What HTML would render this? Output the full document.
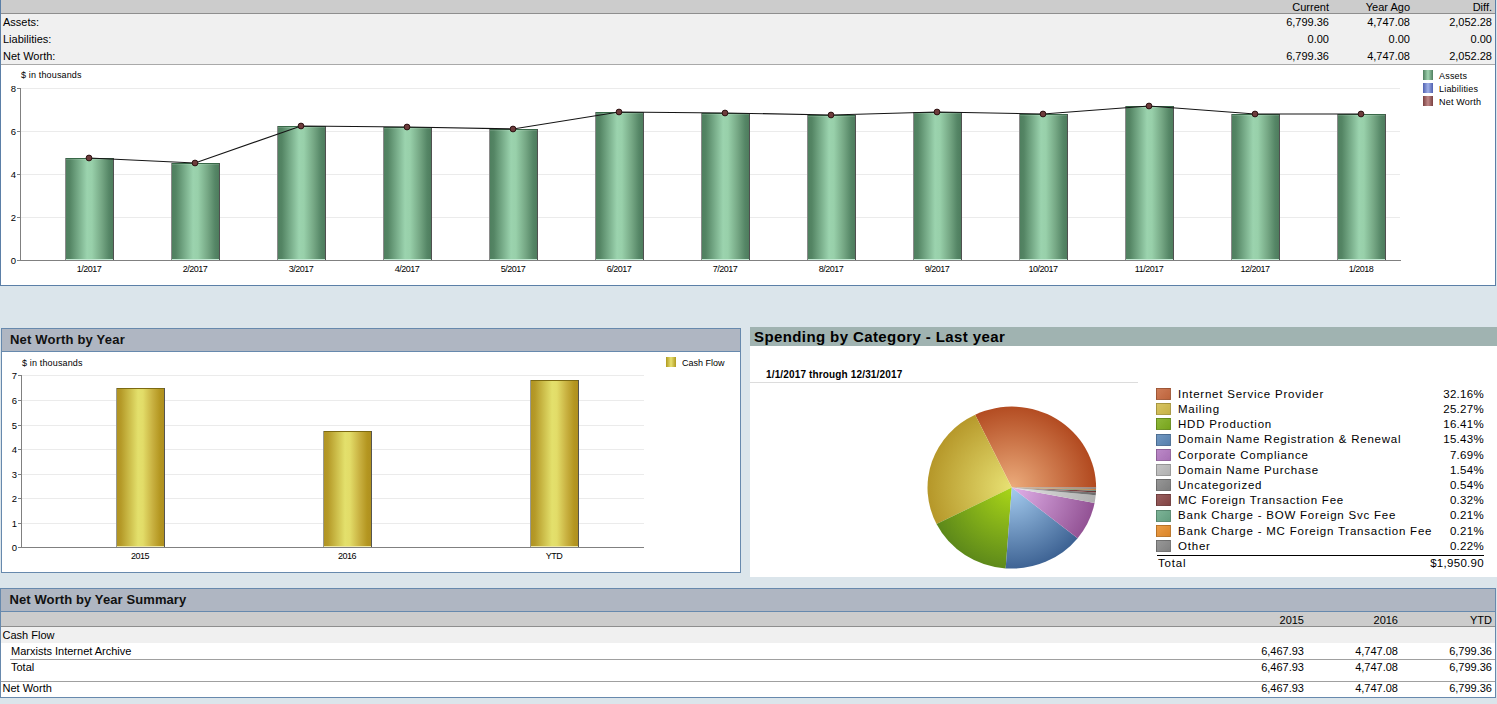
<!DOCTYPE html>
<html><head><meta charset="utf-8"><style>
html,body{margin:0;padding:0;}
body{width:1497px;height:704px;position:relative;overflow:hidden;background:#dbe5eb;font-family:"Liberation Sans", sans-serif;color:#000;}
.abs{position:absolute;}
.t{position:absolute;white-space:nowrap;font-size:11px;line-height:13px;}
.r{text-align:right;}
.sm{position:absolute;white-space:nowrap;font-size:9px;line-height:10px;}
</style></head><body>

<div class="abs" style="left:0;top:0;width:1494px;height:285px;border-left:1px solid #5b7fa7;border-right:1px solid #5b7fa7;border-bottom:1px solid #5b7fa7;background:#fff"></div>
<div class="abs" style="left:1px;top:0;width:1494px;height:13px;background:#cccccc"></div>
<div class="abs" style="left:1px;top:13px;width:1494px;height:1px;background:#8e8e8e"></div>
<div class="abs" style="left:1px;top:14px;width:1494px;height:50px;background:#f0f0f0"></div>
<div class="abs" style="left:1px;top:64px;width:1494px;height:1px;background:#a9a9a9"></div>
<div class="t r" style="right:168px;top:1px;">Current</div>
<div class="t r" style="right:87px;top:1px;">Year Ago</div>
<div class="t r" style="right:5px;top:1px;">Diff.</div>
<div class="t" style="left:3px;top:16px;">Assets:</div>
<div class="t" style="left:3px;top:33px;">Liabilities:</div>
<div class="t" style="left:3px;top:50px;">Net Worth:</div>
<div class="t r" style="right:168px;top:16px;">6,799.36</div>
<div class="t r" style="right:87px;top:16px;">4,747.08</div>
<div class="t r" style="right:5px;top:16px;">2,052.28</div>
<div class="t r" style="right:168px;top:33px;">0.00</div>
<div class="t r" style="right:87px;top:33px;">0.00</div>
<div class="t r" style="right:5px;top:33px;">0.00</div>
<div class="t r" style="right:168px;top:50px;">6,799.36</div>
<div class="t r" style="right:87px;top:50px;">4,747.08</div>
<div class="t r" style="right:5px;top:50px;">2,052.28</div>
<div class="sm" style="left:21px;top:70px;letter-spacing:0.15px">$ in thousands</div>
<div class="sm r" style="right:1481px;top:255.7px;font-size:9.5px">0</div>
<div class="sm r" style="right:1481px;top:212.7px;font-size:9.5px">2</div>
<div class="sm r" style="right:1481px;top:169.7px;font-size:9.5px">4</div>
<div class="sm r" style="right:1481px;top:126.7px;font-size:9.5px">6</div>
<div class="sm r" style="right:1481px;top:83.7px;font-size:9.5px">8</div>
<div class="sm" style="left:49px;width:80px;text-align:center;top:264px;letter-spacing:-0.5px">1/2017</div>
<div class="sm" style="left:155px;width:80px;text-align:center;top:264px;letter-spacing:-0.5px">2/2017</div>
<div class="sm" style="left:261px;width:80px;text-align:center;top:264px;letter-spacing:-0.5px">3/2017</div>
<div class="sm" style="left:367px;width:80px;text-align:center;top:264px;letter-spacing:-0.5px">4/2017</div>
<div class="sm" style="left:473px;width:80px;text-align:center;top:264px;letter-spacing:-0.5px">5/2017</div>
<div class="sm" style="left:579px;width:80px;text-align:center;top:264px;letter-spacing:-0.5px">6/2017</div>
<div class="sm" style="left:685px;width:80px;text-align:center;top:264px;letter-spacing:-0.5px">7/2017</div>
<div class="sm" style="left:791px;width:80px;text-align:center;top:264px;letter-spacing:-0.5px">8/2017</div>
<div class="sm" style="left:897px;width:80px;text-align:center;top:264px;letter-spacing:-0.5px">9/2017</div>
<div class="sm" style="left:1003px;width:80px;text-align:center;top:264px;letter-spacing:-0.5px">10/2017</div>
<div class="sm" style="left:1109px;width:80px;text-align:center;top:264px;letter-spacing:-0.5px">11/2017</div>
<div class="sm" style="left:1215px;width:80px;text-align:center;top:264px;letter-spacing:-0.5px">12/2017</div>
<div class="sm" style="left:1321px;width:80px;text-align:center;top:264px;letter-spacing:-0.5px">1/2018</div>
<div class="sm" style="left:1439px;top:70.5px;letter-spacing:0.2px">Assets</div>
<div class="sm" style="left:1439px;top:83.5px;letter-spacing:0.2px">Liabilities</div>
<div class="sm" style="left:1439px;top:96.5px;letter-spacing:0.2px">Net Worth</div>
<div class="abs" style="left:1px;top:328px;width:738px;height:243px;border:1px solid #6789ad;background:#fff"></div>
<div class="abs" style="left:2px;top:329px;width:738px;height:22px;background:#afb6c2;border-bottom:1px solid #6789ad"></div>
<div class="t" style="left:10px;top:332px;font-size:13px;line-height:15px;font-weight:bold;letter-spacing:0.2px;color:#111">Net Worth by Year</div>
<div class="sm" style="left:22px;top:357.5px;letter-spacing:0.15px">$ in thousands</div>
<div class="sm r" style="right:1480px;top:542.7px;font-size:9.5px">0</div>
<div class="sm r" style="right:1480px;top:518.7px;font-size:9.5px">1</div>
<div class="sm r" style="right:1480px;top:493.7px;font-size:9.5px">2</div>
<div class="sm r" style="right:1480px;top:469.7px;font-size:9.5px">3</div>
<div class="sm r" style="right:1480px;top:444.7px;font-size:9.5px">4</div>
<div class="sm r" style="right:1480px;top:420.7px;font-size:9.5px">5</div>
<div class="sm r" style="right:1480px;top:395.7px;font-size:9.5px">6</div>
<div class="sm r" style="right:1480px;top:370.7px;font-size:9.5px">7</div>
<div class="sm" style="left:100px;width:80px;text-align:center;top:550.5px;letter-spacing:-0.5px">2015</div>
<div class="sm" style="left:307px;width:80px;text-align:center;top:550.5px;letter-spacing:-0.5px">2016</div>
<div class="sm" style="left:514px;width:80px;text-align:center;top:550.5px;letter-spacing:-0.5px">YTD</div>
<div class="sm" style="left:682px;top:357.7px">Cash Flow</div>
<div class="abs" style="left:750px;top:327px;width:747px;height:19px;background:#a0b3b1"></div>
<div class="abs" style="left:750px;top:346px;width:747px;height:231px;background:#fff"></div>
<div class="t" style="left:754px;top:328px;font-size:15px;line-height:17px;font-weight:bold;letter-spacing:0.4px">Spending by Category - Last year</div>
<div class="t" style="left:766px;top:369px;font-size:10px;line-height:12px;font-weight:bold;letter-spacing:0.15px">1/1/2017 through 12/31/2017</div>
<div class="abs" style="left:750px;top:382px;width:388px;height:1px;background:#dcdcdc"></div>
<div class="abs" style="left:1156px;top:388.0px;width:13px;height:10px;border:1px solid rgba(0,0,0,0.18);background:#c86a40;background-image:linear-gradient(135deg,rgba(255,255,255,0.12),rgba(0,0,0,0.06))"></div>
<div class="t" style="left:1178px;top:387.8px;font-size:11.5px;letter-spacing:0.78px">Internet Service Provider</div>
<div class="t r" style="right:13px;top:387.8px;font-size:11.5px;letter-spacing:0.3px">32.16%</div>
<div class="abs" style="left:1156px;top:403.2px;width:13px;height:10px;border:1px solid rgba(0,0,0,0.18);background:#d2bc4c;background-image:linear-gradient(135deg,rgba(255,255,255,0.12),rgba(0,0,0,0.06))"></div>
<div class="t" style="left:1178px;top:403.0px;font-size:11.5px;letter-spacing:0.78px">Mailing</div>
<div class="t r" style="right:13px;top:403.0px;font-size:11.5px;letter-spacing:0.3px">25.27%</div>
<div class="abs" style="left:1156px;top:418.4px;width:13px;height:10px;border:1px solid rgba(0,0,0,0.18);background:#7eae1e;background-image:linear-gradient(135deg,rgba(255,255,255,0.12),rgba(0,0,0,0.06))"></div>
<div class="t" style="left:1178px;top:418.2px;font-size:11.5px;letter-spacing:0.78px">HDD Production</div>
<div class="t r" style="right:13px;top:418.2px;font-size:11.5px;letter-spacing:0.3px">16.41%</div>
<div class="abs" style="left:1156px;top:433.6px;width:13px;height:10px;border:1px solid rgba(0,0,0,0.18);background:#5c88b8;background-image:linear-gradient(135deg,rgba(255,255,255,0.12),rgba(0,0,0,0.06))"></div>
<div class="t" style="left:1178px;top:433.4px;font-size:11.5px;letter-spacing:0.78px">Domain Name Registration &amp; Renewal</div>
<div class="t r" style="right:13px;top:433.4px;font-size:11.5px;letter-spacing:0.3px">15.43%</div>
<div class="abs" style="left:1156px;top:448.8px;width:13px;height:10px;border:1px solid rgba(0,0,0,0.18);background:#b278c0;background-image:linear-gradient(135deg,rgba(255,255,255,0.12),rgba(0,0,0,0.06))"></div>
<div class="t" style="left:1178px;top:448.6px;font-size:11.5px;letter-spacing:0.78px">Corporate Compliance</div>
<div class="t r" style="right:13px;top:448.6px;font-size:11.5px;letter-spacing:0.3px">7.69%</div>
<div class="abs" style="left:1156px;top:464.0px;width:13px;height:10px;border:1px solid rgba(0,0,0,0.18);background:#bcbcbc;background-image:linear-gradient(135deg,rgba(255,255,255,0.12),rgba(0,0,0,0.06))"></div>
<div class="t" style="left:1178px;top:463.8px;font-size:11.5px;letter-spacing:0.78px">Domain Name Purchase</div>
<div class="t r" style="right:13px;top:463.8px;font-size:11.5px;letter-spacing:0.3px">1.54%</div>
<div class="abs" style="left:1156px;top:479.2px;width:13px;height:10px;border:1px solid rgba(0,0,0,0.18);background:#878787;background-image:linear-gradient(135deg,rgba(255,255,255,0.12),rgba(0,0,0,0.06))"></div>
<div class="t" style="left:1178px;top:479.0px;font-size:11.5px;letter-spacing:0.78px">Uncategorized</div>
<div class="t r" style="right:13px;top:479.0px;font-size:11.5px;letter-spacing:0.3px">0.54%</div>
<div class="abs" style="left:1156px;top:494.4px;width:13px;height:10px;border:1px solid rgba(0,0,0,0.18);background:#8a4848;background-image:linear-gradient(135deg,rgba(255,255,255,0.12),rgba(0,0,0,0.06))"></div>
<div class="t" style="left:1178px;top:494.2px;font-size:11.5px;letter-spacing:0.78px">MC Foreign Transaction Fee</div>
<div class="t r" style="right:13px;top:494.2px;font-size:11.5px;letter-spacing:0.3px">0.32%</div>
<div class="abs" style="left:1156px;top:509.6px;width:13px;height:10px;border:1px solid rgba(0,0,0,0.18);background:#6aa888;background-image:linear-gradient(135deg,rgba(255,255,255,0.12),rgba(0,0,0,0.06))"></div>
<div class="t" style="left:1178px;top:509.4px;font-size:11.5px;letter-spacing:0.78px">Bank Charge - BOW Foreign Svc Fee</div>
<div class="t r" style="right:13px;top:509.4px;font-size:11.5px;letter-spacing:0.3px">0.21%</div>
<div class="abs" style="left:1156px;top:524.8px;width:13px;height:10px;border:1px solid rgba(0,0,0,0.18);background:#e88e2c;background-image:linear-gradient(135deg,rgba(255,255,255,0.12),rgba(0,0,0,0.06))"></div>
<div class="t" style="left:1178px;top:524.6px;font-size:11.5px;letter-spacing:0.78px">Bank Charge - MC Foreign Transaction Fee</div>
<div class="t r" style="right:13px;top:524.6px;font-size:11.5px;letter-spacing:0.3px">0.21%</div>
<div class="abs" style="left:1156px;top:540.0px;width:13px;height:10px;border:1px solid rgba(0,0,0,0.18);background:#898989;background-image:linear-gradient(135deg,rgba(255,255,255,0.12),rgba(0,0,0,0.06))"></div>
<div class="t" style="left:1178px;top:539.8px;font-size:11.5px;letter-spacing:0.78px">Other</div>
<div class="t r" style="right:13px;top:539.8px;font-size:11.5px;letter-spacing:0.3px">0.22%</div>
<div class="abs" style="left:1157px;top:555px;width:327px;height:1px;background:#000"></div>
<div class="t" style="left:1158px;top:557px;font-size:11.5px;letter-spacing:0.8px">Total</div>
<div class="t r" style="right:13px;top:557px;font-size:11.5px;letter-spacing:0.3px">$1,950.90</div>
<div class="abs" style="left:0px;top:588px;width:1494px;height:108px;border:1px solid #6789ad;background:#fff"></div>
<div class="abs" style="left:1px;top:589px;width:1494px;height:22px;background:#afb6c2;border-bottom:1px solid #6789ad"></div>
<div class="t" style="left:9.5px;top:592px;font-size:13px;line-height:15px;font-weight:bold;letter-spacing:0.1px;color:#111">Net Worth by Year Summary</div>
<div class="abs" style="left:1px;top:612px;width:1494px;height:14px;background:#cccccc"></div>
<div class="abs" style="left:1px;top:626px;width:1494px;height:1px;background:#8e8e8e"></div>
<div class="abs" style="left:1px;top:627px;width:1494px;height:16px;background:#f0f0f0"></div>
<div class="abs" style="left:10px;top:659px;width:1485px;height:1px;background:#a0a0a0"></div>
<div class="abs" style="left:1px;top:681px;width:1494px;height:1px;background:#a0a0a0"></div>
<div class="t r" style="right:193px;top:614px;">2015</div>
<div class="t r" style="right:99px;top:614px;">2016</div>
<div class="t r" style="right:5px;top:614px;">YTD</div>
<div class="t" style="left:2.5px;top:629px;">Cash Flow</div>
<div class="t" style="left:11px;top:645px;">Marxists Internet Archive</div>
<div class="t" style="left:11px;top:661px;">Total</div>
<div class="t" style="left:2.5px;top:682px;">Net Worth</div>
<div class="t r" style="right:193px;top:645px;">6,467.93</div>
<div class="t r" style="right:99px;top:645px;">4,747.08</div>
<div class="t r" style="right:5px;top:645px;">6,799.36</div>
<div class="t r" style="right:193px;top:661px;">6,467.93</div>
<div class="t r" style="right:99px;top:661px;">4,747.08</div>
<div class="t r" style="right:5px;top:661px;">6,799.36</div>
<div class="t r" style="right:193px;top:682px;">6,467.93</div>
<div class="t r" style="right:99px;top:682px;">4,747.08</div>
<div class="t r" style="right:5px;top:682px;">6,799.36</div>
<svg class="abs" style="left:0;top:0" width="1497" height="704">
<defs>
<linearGradient id="gG" x1="0" x2="1" y1="0" y2="0">
<stop offset="0" stop-color="#4e7e5e"/><stop offset="0.1" stop-color="#548564"/><stop offset="0.45" stop-color="#9bd3ae"/><stop offset="0.55" stop-color="#98d0aa"/><stop offset="0.75" stop-color="#75a784"/><stop offset="0.9" stop-color="#558666"/><stop offset="1" stop-color="#4c7a5b"/>
</linearGradient>
<linearGradient id="gY" x1="0" x2="1" y1="0" y2="0">
<stop offset="0" stop-color="#b09220"/><stop offset="0.1" stop-color="#b59a28"/><stop offset="0.45" stop-color="#e3e06c"/><stop offset="0.55" stop-color="#e2dc68"/><stop offset="0.75" stop-color="#c8b040"/><stop offset="0.9" stop-color="#b49620"/><stop offset="1" stop-color="#ae8e1e"/>
</linearGradient>
<linearGradient id="lG" x1="0" x2="1" y1="0" y2="0"><stop offset="0" stop-color="#4f7f5f"/><stop offset="0.5" stop-color="#a0d4b0"/><stop offset="1" stop-color="#4f7f5f"/></linearGradient>
<linearGradient id="lB" x1="0" x2="1" y1="0" y2="0"><stop offset="0" stop-color="#5060b0"/><stop offset="0.5" stop-color="#a0b0e8"/><stop offset="1" stop-color="#5060b0"/></linearGradient>
<linearGradient id="lR" x1="0" x2="1" y1="0" y2="0"><stop offset="0" stop-color="#7a4040"/><stop offset="0.5" stop-color="#c08888"/><stop offset="1" stop-color="#7a4040"/></linearGradient>
<linearGradient id="lY" x1="0" x2="1" y1="0" y2="0"><stop offset="0" stop-color="#b09a20"/><stop offset="0.5" stop-color="#e8e070"/><stop offset="1" stop-color="#b09a20"/></linearGradient>
</defs>
<line x1="17" x2="20" y1="260.5" y2="260.5" stroke="#808080" stroke-width="1"/>
<line x1="21" x2="1400" y1="217.5" y2="217.5" stroke="#ebebeb" stroke-width="1"/>
<line x1="17" x2="20" y1="217.5" y2="217.5" stroke="#808080" stroke-width="1"/>
<line x1="21" x2="1400" y1="174.5" y2="174.5" stroke="#ebebeb" stroke-width="1"/>
<line x1="17" x2="20" y1="174.5" y2="174.5" stroke="#808080" stroke-width="1"/>
<line x1="21" x2="1400" y1="131.5" y2="131.5" stroke="#ebebeb" stroke-width="1"/>
<line x1="17" x2="20" y1="131.5" y2="131.5" stroke="#808080" stroke-width="1"/>
<line x1="21" x2="1400" y1="88.5" y2="88.5" stroke="#ebebeb" stroke-width="1"/>
<line x1="17" x2="20" y1="88.5" y2="88.5" stroke="#808080" stroke-width="1"/>
<line x1="20.5" x2="20.5" y1="88" y2="261" stroke="#808080" stroke-width="1"/>
<rect x="65" y="158" width="49" height="102" fill="url(#gG)" shape-rendering="crispEdges"/>
<rect x="65" y="158" width="1" height="102" fill="#8a8a8a" shape-rendering="crispEdges"/>
<rect x="113" y="158" width="1" height="102" fill="#505050" shape-rendering="crispEdges"/>
<rect x="66" y="158" width="47" height="1" fill="#386848" shape-rendering="crispEdges"/>
<rect x="66" y="159" width="47" height="1" fill="#ffffff" fill-opacity="0.12" shape-rendering="crispEdges"/>
<rect x="66" y="259" width="47" height="1" fill="#c4ead4" shape-rendering="crispEdges"/>
<rect x="171" y="163" width="49" height="97" fill="url(#gG)" shape-rendering="crispEdges"/>
<rect x="171" y="163" width="1" height="97" fill="#8a8a8a" shape-rendering="crispEdges"/>
<rect x="219" y="163" width="1" height="97" fill="#505050" shape-rendering="crispEdges"/>
<rect x="172" y="163" width="47" height="1" fill="#386848" shape-rendering="crispEdges"/>
<rect x="172" y="164" width="47" height="1" fill="#ffffff" fill-opacity="0.12" shape-rendering="crispEdges"/>
<rect x="172" y="259" width="47" height="1" fill="#c4ead4" shape-rendering="crispEdges"/>
<rect x="277" y="126" width="49" height="134" fill="url(#gG)" shape-rendering="crispEdges"/>
<rect x="277" y="126" width="1" height="134" fill="#8a8a8a" shape-rendering="crispEdges"/>
<rect x="325" y="126" width="1" height="134" fill="#505050" shape-rendering="crispEdges"/>
<rect x="278" y="126" width="47" height="1" fill="#386848" shape-rendering="crispEdges"/>
<rect x="278" y="127" width="47" height="1" fill="#ffffff" fill-opacity="0.12" shape-rendering="crispEdges"/>
<rect x="278" y="259" width="47" height="1" fill="#c4ead4" shape-rendering="crispEdges"/>
<rect x="383" y="127" width="49" height="133" fill="url(#gG)" shape-rendering="crispEdges"/>
<rect x="383" y="127" width="1" height="133" fill="#8a8a8a" shape-rendering="crispEdges"/>
<rect x="431" y="127" width="1" height="133" fill="#505050" shape-rendering="crispEdges"/>
<rect x="384" y="127" width="47" height="1" fill="#386848" shape-rendering="crispEdges"/>
<rect x="384" y="128" width="47" height="1" fill="#ffffff" fill-opacity="0.12" shape-rendering="crispEdges"/>
<rect x="384" y="259" width="47" height="1" fill="#c4ead4" shape-rendering="crispEdges"/>
<rect x="489" y="129" width="49" height="131" fill="url(#gG)" shape-rendering="crispEdges"/>
<rect x="489" y="129" width="1" height="131" fill="#8a8a8a" shape-rendering="crispEdges"/>
<rect x="537" y="129" width="1" height="131" fill="#505050" shape-rendering="crispEdges"/>
<rect x="490" y="129" width="47" height="1" fill="#386848" shape-rendering="crispEdges"/>
<rect x="490" y="130" width="47" height="1" fill="#ffffff" fill-opacity="0.12" shape-rendering="crispEdges"/>
<rect x="490" y="259" width="47" height="1" fill="#c4ead4" shape-rendering="crispEdges"/>
<rect x="595" y="112" width="49" height="148" fill="url(#gG)" shape-rendering="crispEdges"/>
<rect x="595" y="112" width="1" height="148" fill="#8a8a8a" shape-rendering="crispEdges"/>
<rect x="643" y="112" width="1" height="148" fill="#505050" shape-rendering="crispEdges"/>
<rect x="596" y="112" width="47" height="1" fill="#386848" shape-rendering="crispEdges"/>
<rect x="596" y="113" width="47" height="1" fill="#ffffff" fill-opacity="0.12" shape-rendering="crispEdges"/>
<rect x="596" y="259" width="47" height="1" fill="#c4ead4" shape-rendering="crispEdges"/>
<rect x="701" y="113" width="49" height="147" fill="url(#gG)" shape-rendering="crispEdges"/>
<rect x="701" y="113" width="1" height="147" fill="#8a8a8a" shape-rendering="crispEdges"/>
<rect x="749" y="113" width="1" height="147" fill="#505050" shape-rendering="crispEdges"/>
<rect x="702" y="113" width="47" height="1" fill="#386848" shape-rendering="crispEdges"/>
<rect x="702" y="114" width="47" height="1" fill="#ffffff" fill-opacity="0.12" shape-rendering="crispEdges"/>
<rect x="702" y="259" width="47" height="1" fill="#c4ead4" shape-rendering="crispEdges"/>
<rect x="807" y="115" width="49" height="145" fill="url(#gG)" shape-rendering="crispEdges"/>
<rect x="807" y="115" width="1" height="145" fill="#8a8a8a" shape-rendering="crispEdges"/>
<rect x="855" y="115" width="1" height="145" fill="#505050" shape-rendering="crispEdges"/>
<rect x="808" y="115" width="47" height="1" fill="#386848" shape-rendering="crispEdges"/>
<rect x="808" y="116" width="47" height="1" fill="#ffffff" fill-opacity="0.12" shape-rendering="crispEdges"/>
<rect x="808" y="259" width="47" height="1" fill="#c4ead4" shape-rendering="crispEdges"/>
<rect x="913" y="112" width="49" height="148" fill="url(#gG)" shape-rendering="crispEdges"/>
<rect x="913" y="112" width="1" height="148" fill="#8a8a8a" shape-rendering="crispEdges"/>
<rect x="961" y="112" width="1" height="148" fill="#505050" shape-rendering="crispEdges"/>
<rect x="914" y="112" width="47" height="1" fill="#386848" shape-rendering="crispEdges"/>
<rect x="914" y="113" width="47" height="1" fill="#ffffff" fill-opacity="0.12" shape-rendering="crispEdges"/>
<rect x="914" y="259" width="47" height="1" fill="#c4ead4" shape-rendering="crispEdges"/>
<rect x="1019" y="114" width="49" height="146" fill="url(#gG)" shape-rendering="crispEdges"/>
<rect x="1019" y="114" width="1" height="146" fill="#8a8a8a" shape-rendering="crispEdges"/>
<rect x="1067" y="114" width="1" height="146" fill="#505050" shape-rendering="crispEdges"/>
<rect x="1020" y="114" width="47" height="1" fill="#386848" shape-rendering="crispEdges"/>
<rect x="1020" y="115" width="47" height="1" fill="#ffffff" fill-opacity="0.12" shape-rendering="crispEdges"/>
<rect x="1020" y="259" width="47" height="1" fill="#c4ead4" shape-rendering="crispEdges"/>
<rect x="1125" y="106" width="49" height="154" fill="url(#gG)" shape-rendering="crispEdges"/>
<rect x="1125" y="106" width="1" height="154" fill="#8a8a8a" shape-rendering="crispEdges"/>
<rect x="1173" y="106" width="1" height="154" fill="#505050" shape-rendering="crispEdges"/>
<rect x="1126" y="106" width="47" height="1" fill="#386848" shape-rendering="crispEdges"/>
<rect x="1126" y="107" width="47" height="1" fill="#ffffff" fill-opacity="0.12" shape-rendering="crispEdges"/>
<rect x="1126" y="259" width="47" height="1" fill="#c4ead4" shape-rendering="crispEdges"/>
<rect x="1231" y="114" width="49" height="146" fill="url(#gG)" shape-rendering="crispEdges"/>
<rect x="1231" y="114" width="1" height="146" fill="#8a8a8a" shape-rendering="crispEdges"/>
<rect x="1279" y="114" width="1" height="146" fill="#505050" shape-rendering="crispEdges"/>
<rect x="1232" y="114" width="47" height="1" fill="#386848" shape-rendering="crispEdges"/>
<rect x="1232" y="115" width="47" height="1" fill="#ffffff" fill-opacity="0.12" shape-rendering="crispEdges"/>
<rect x="1232" y="259" width="47" height="1" fill="#c4ead4" shape-rendering="crispEdges"/>
<rect x="1337" y="114" width="49" height="146" fill="url(#gG)" shape-rendering="crispEdges"/>
<rect x="1337" y="114" width="1" height="146" fill="#8a8a8a" shape-rendering="crispEdges"/>
<rect x="1385" y="114" width="1" height="146" fill="#505050" shape-rendering="crispEdges"/>
<rect x="1338" y="114" width="47" height="1" fill="#386848" shape-rendering="crispEdges"/>
<rect x="1338" y="115" width="47" height="1" fill="#ffffff" fill-opacity="0.12" shape-rendering="crispEdges"/>
<rect x="1338" y="259" width="47" height="1" fill="#c4ead4" shape-rendering="crispEdges"/>
<line x1="20" x2="1401" y1="260.5" y2="260.5" stroke="#808080" stroke-width="1"/>
<polyline fill="none" stroke="#151515" stroke-width="1.15" points="89,158 195,163 301,126 407,127 513,129 619,112 725,113 831,115 937,112 1043,114 1149,106 1255,114 1361,114"/>
<circle cx="89" cy="158" r="2.9" fill="#6e3c3c" stroke="#2e1414" stroke-width="1"/>
<circle cx="195" cy="163" r="2.9" fill="#6e3c3c" stroke="#2e1414" stroke-width="1"/>
<circle cx="301" cy="126" r="2.9" fill="#6e3c3c" stroke="#2e1414" stroke-width="1"/>
<circle cx="407" cy="127" r="2.9" fill="#6e3c3c" stroke="#2e1414" stroke-width="1"/>
<circle cx="513" cy="129" r="2.9" fill="#6e3c3c" stroke="#2e1414" stroke-width="1"/>
<circle cx="619" cy="112" r="2.9" fill="#6e3c3c" stroke="#2e1414" stroke-width="1"/>
<circle cx="725" cy="113" r="2.9" fill="#6e3c3c" stroke="#2e1414" stroke-width="1"/>
<circle cx="831" cy="115" r="2.9" fill="#6e3c3c" stroke="#2e1414" stroke-width="1"/>
<circle cx="937" cy="112" r="2.9" fill="#6e3c3c" stroke="#2e1414" stroke-width="1"/>
<circle cx="1043" cy="114" r="2.9" fill="#6e3c3c" stroke="#2e1414" stroke-width="1"/>
<circle cx="1149" cy="106" r="2.9" fill="#6e3c3c" stroke="#2e1414" stroke-width="1"/>
<circle cx="1255" cy="114" r="2.9" fill="#6e3c3c" stroke="#2e1414" stroke-width="1"/>
<circle cx="1361" cy="114" r="2.9" fill="#6e3c3c" stroke="#2e1414" stroke-width="1"/>
<rect x="1423" y="70" width="10" height="10" fill="url(#lG)"/>
<rect x="1423" y="83" width="10" height="10" fill="url(#lB)"/>
<rect x="1423" y="96" width="10" height="10" fill="url(#lR)"/>
<line x1="18" x2="21" y1="547.5" y2="547.5" stroke="#808080" stroke-width="1"/>
<line x1="22" x2="644" y1="523.5" y2="523.5" stroke="#ebebeb" stroke-width="1"/>
<line x1="18" x2="21" y1="523.5" y2="523.5" stroke="#808080" stroke-width="1"/>
<line x1="22" x2="644" y1="498.5" y2="498.5" stroke="#ebebeb" stroke-width="1"/>
<line x1="18" x2="21" y1="498.5" y2="498.5" stroke="#808080" stroke-width="1"/>
<line x1="22" x2="644" y1="474.5" y2="474.5" stroke="#ebebeb" stroke-width="1"/>
<line x1="18" x2="21" y1="474.5" y2="474.5" stroke="#808080" stroke-width="1"/>
<line x1="22" x2="644" y1="449.5" y2="449.5" stroke="#ebebeb" stroke-width="1"/>
<line x1="18" x2="21" y1="449.5" y2="449.5" stroke="#808080" stroke-width="1"/>
<line x1="22" x2="644" y1="425.5" y2="425.5" stroke="#ebebeb" stroke-width="1"/>
<line x1="18" x2="21" y1="425.5" y2="425.5" stroke="#808080" stroke-width="1"/>
<line x1="22" x2="644" y1="400.5" y2="400.5" stroke="#ebebeb" stroke-width="1"/>
<line x1="18" x2="21" y1="400.5" y2="400.5" stroke="#808080" stroke-width="1"/>
<line x1="22" x2="644" y1="375.5" y2="375.5" stroke="#ebebeb" stroke-width="1"/>
<line x1="18" x2="21" y1="375.5" y2="375.5" stroke="#808080" stroke-width="1"/>
<line x1="21.5" x2="21.5" y1="375" y2="548" stroke="#808080" stroke-width="1"/>
<rect x="116" y="388" width="49" height="159" fill="url(#gY)" shape-rendering="crispEdges"/>
<rect x="116" y="388" width="1" height="159" fill="#9a9a90" shape-rendering="crispEdges"/>
<rect x="164" y="388" width="1" height="159" fill="#555550" shape-rendering="crispEdges"/>
<rect x="117" y="388" width="47" height="1" fill="#7c6a12" shape-rendering="crispEdges"/>
<rect x="117" y="546" width="47" height="1" fill="#eee8a8" shape-rendering="crispEdges"/>
<rect x="323" y="431" width="49" height="116" fill="url(#gY)" shape-rendering="crispEdges"/>
<rect x="323" y="431" width="1" height="116" fill="#9a9a90" shape-rendering="crispEdges"/>
<rect x="371" y="431" width="1" height="116" fill="#555550" shape-rendering="crispEdges"/>
<rect x="324" y="431" width="47" height="1" fill="#7c6a12" shape-rendering="crispEdges"/>
<rect x="324" y="546" width="47" height="1" fill="#eee8a8" shape-rendering="crispEdges"/>
<rect x="530" y="380" width="49" height="167" fill="url(#gY)" shape-rendering="crispEdges"/>
<rect x="530" y="380" width="1" height="167" fill="#9a9a90" shape-rendering="crispEdges"/>
<rect x="578" y="380" width="1" height="167" fill="#555550" shape-rendering="crispEdges"/>
<rect x="531" y="380" width="47" height="1" fill="#7c6a12" shape-rendering="crispEdges"/>
<rect x="531" y="546" width="47" height="1" fill="#eee8a8" shape-rendering="crispEdges"/>
<line x1="21" x2="644" y1="547.5" y2="547.5" stroke="#808080" stroke-width="1"/>
<rect x="666" y="357" width="10" height="10" fill="url(#lY)"/>
</svg>
<svg class="abs" style="left:0;top:0" width="1497" height="704"><defs>
<radialGradient id="pg0" cx="1011.8" cy="487.6" r="83" gradientUnits="userSpaceOnUse"><stop offset="0" stop-color="#ecac7c"/><stop offset="1" stop-color="#b24a20"/></radialGradient>
<radialGradient id="pg1" cx="1011.8" cy="487.6" r="83" gradientUnits="userSpaceOnUse"><stop offset="0" stop-color="#e8e274"/><stop offset="1" stop-color="#b6982a"/></radialGradient>
<radialGradient id="pg2" cx="1011.8" cy="487.6" r="83" gradientUnits="userSpaceOnUse"><stop offset="0" stop-color="#aad618"/><stop offset="1" stop-color="#5c881a"/></radialGradient>
<radialGradient id="pg3" cx="1011.8" cy="487.6" r="83" gradientUnits="userSpaceOnUse"><stop offset="0" stop-color="#a6cdf0"/><stop offset="1" stop-color="#3c6192"/></radialGradient>
<radialGradient id="pg4" cx="1011.8" cy="487.6" r="83" gradientUnits="userSpaceOnUse"><stop offset="0" stop-color="#e2b2ea"/><stop offset="1" stop-color="#935395"/></radialGradient>
<radialGradient id="pg5" cx="1011.8" cy="487.6" r="83" gradientUnits="userSpaceOnUse"><stop offset="0" stop-color="#e4e4e4"/><stop offset="1" stop-color="#b0b0b0"/></radialGradient>
<radialGradient id="pg6" cx="1011.8" cy="487.6" r="83" gradientUnits="userSpaceOnUse"><stop offset="0" stop-color="#a8a8a8"/><stop offset="1" stop-color="#6c6c6c"/></radialGradient>
<radialGradient id="pg7" cx="1011.8" cy="487.6" r="83" gradientUnits="userSpaceOnUse"><stop offset="0" stop-color="#a86868"/><stop offset="1" stop-color="#6c3434"/></radialGradient>
<radialGradient id="pg8" cx="1011.8" cy="487.6" r="83" gradientUnits="userSpaceOnUse"><stop offset="0" stop-color="#98c8a8"/><stop offset="1" stop-color="#4c8060"/></radialGradient>
<radialGradient id="pg9" cx="1011.8" cy="487.6" r="83" gradientUnits="userSpaceOnUse"><stop offset="0" stop-color="#f4a848"/><stop offset="1" stop-color="#c86010"/></radialGradient>
<radialGradient id="pg10" cx="1011.8" cy="487.6" r="83" gradientUnits="userSpaceOnUse"><stop offset="0" stop-color="#a8a8a8"/><stop offset="1" stop-color="#6c6c6c"/></radialGradient>
</defs>
<path d="M1011.8,487.6 L1096.10,487.60 A84.3,81 0 0 0 975.14,414.66 Z" fill="url(#pg0)"/>
<path d="M1011.8,487.6 L975.14,414.66 A84.3,81 0 0 0 936.52,524.06 Z" fill="url(#pg1)"/>
<path d="M1011.8,487.6 L936.52,524.06 A84.3,81 0 0 0 1005.66,568.38 Z" fill="url(#pg2)"/>
<path d="M1011.8,487.6 L1005.66,568.38 A84.3,81 0 0 0 1077.66,538.17 Z" fill="url(#pg3)"/>
<path d="M1011.8,487.6 L1077.66,538.17 A84.3,81 0 0 0 1094.57,502.98 Z" fill="url(#pg4)"/>
<path d="M1011.8,487.6 L1094.57,502.98 A84.3,81 0 0 0 1095.73,495.22 Z" fill="url(#pg5)"/>
<path d="M1011.8,487.6 L1095.73,495.22 A84.3,81 0 0 0 1095.95,492.48 Z" fill="url(#pg6)"/>
<path d="M1011.8,487.6 L1095.95,492.48 A84.3,81 0 0 0 1096.03,490.86 Z" fill="url(#pg7)"/>
<path d="M1011.8,487.6 L1096.03,490.86 A84.3,81 0 0 0 1096.07,489.79 Z" fill="url(#pg8)"/>
<path d="M1011.8,487.6 L1096.07,489.79 A84.3,81 0 0 0 1096.09,488.72 Z" fill="url(#pg9)"/>
<path d="M1011.8,487.6 L1096.09,488.72 A84.3,81 0 0 0 1096.10,487.60 Z" fill="url(#pg10)"/>
</svg>
</body></html>
